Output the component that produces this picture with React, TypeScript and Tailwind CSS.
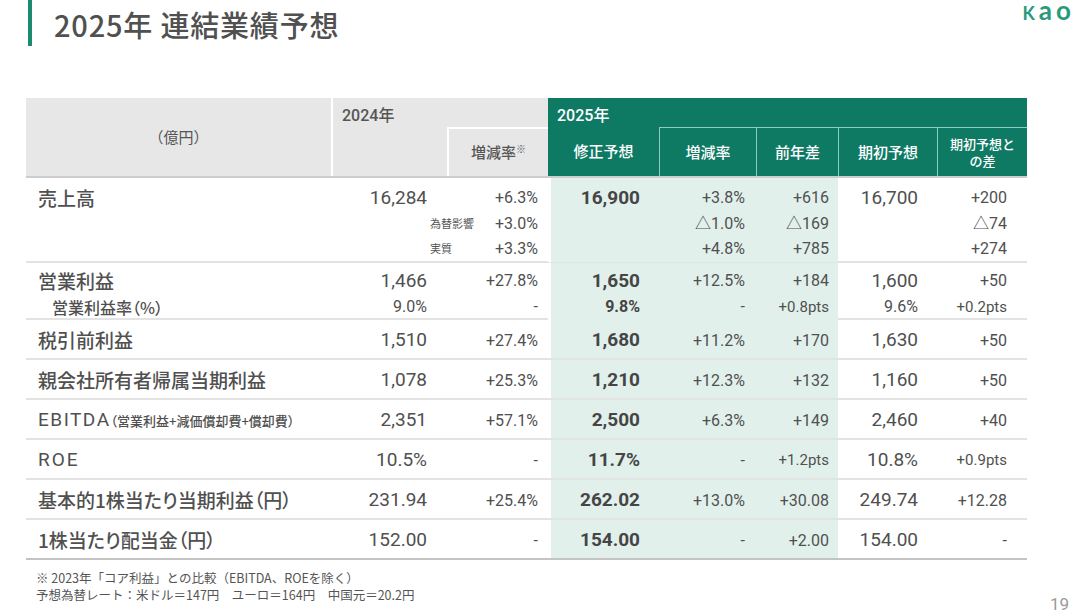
import React from "react";

const COLS = "grid grid-cols-[307px_114px_101px_111px_97px_82px_99px_90px] w-[1001px]";
const TINT = "bg-[#e2f0ec]";
const LABEL = "font-['Noto_Sans_CJK_JP',sans-serif] font-medium text-[#505050] [font-feature-settings:'palt']";

type Line = { t: string; sub?: string };

function Cell({
  lines,
  cls = "",
  tint = false,
  bold = false,
  size = "text-[16px]",
}: {
  lines: (string | Line)[];
  cls?: string;
  tint?: boolean;
  bold?: boolean;
  size?: string;
}) {
  return (
    <div className={`flex flex-col ${tint ? TINT : ""} ${cls}`}>
      {lines.map((l, i) => {
        const line: Line = typeof l === "string" ? { t: l } : l;
        return (
          <div key={i} className={`flex items-center justify-end whitespace-nowrap ${bold ? "font-bold text-[#454545]" : ""} ${size}`}>
            {line.sub !== undefined && (
              <span className="ml-[-17px] mr-auto text-[11px] text-[#555] font-['Noto_Sans_CJK_JP',sans-serif]">{line.sub}</span>
            )}
            <span>{line.t}</span>
          </div>
        );
      })}
    </div>
  );
}

type RowDef = {
  label: React.ReactNode;
  v24: string;
  r24: string;
  f25: string;
  r25: string;
  d25: string;
  init: string;
  dInit: string;
};

function SimpleRow({ r, last = false }: { r: RowDef; last?: boolean }) {
  return (
    <div className={`${COLS} h-[40px] pt-[3px] ${last ? "border-b-2 border-[#c4c4c4]" : "border-b-2 border-[#e3e3e3]"}`}>
      <div className={`flex items-center pl-[12px] text-[19px] whitespace-nowrap ${LABEL}`}>{r.label}</div>
      <div className="flex items-center justify-end pr-[20px] text-[19px]">{r.v24}</div>
      <div className="flex items-center justify-end pr-[10px] text-[16px]">{r.r24}</div>
      <div className={`flex items-center justify-end pr-[19px] text-[19px] font-bold text-[#454545] border-l-[3px] border-white mt-[-3px] pt-[3px] ${TINT}`}>{r.f25}</div>
      <div className={`flex items-center justify-end pr-[11px] text-[16px] mt-[-3px] pt-[3px] ${TINT}`}>{r.r25}</div>
      <div className={`flex items-center justify-end pr-[9px] mt-[-3px] pt-[3px] ${r.d25.includes("pts") ? "text-[15px]" : "text-[16px]"} ${TINT}`}>{r.d25}</div>
      <div className="flex items-center justify-end pr-[19px] text-[19px]">{r.init}</div>
      <div className={`flex items-center justify-end pr-[20px] ${r.dInit.includes("pts") ? "text-[15px]" : "text-[16px]"}`}>{r.dInit}</div>
    </div>
  );
}

export default function App() {
  const rows: RowDef[] = [
    { label: "税引前利益", v24: "1,510", r24: "+27.4%", f25: "1,680", r25: "+11.2%", d25: "+170", init: "1,630", dInit: "+50" },
    { label: "親会社所有者帰属当期利益", v24: "1,078", r24: "+25.3%", f25: "1,210", r25: "+12.3%", d25: "+132", init: "1,160", dInit: "+50" },
    {
      label: (
        <span className="flex items-baseline">
          <span className="font-['Roboto',sans-serif] font-normal tracking-[1.5px]">EBITDA</span>
          <span className="text-[13px]">（営業利益+減価償却費+償却費）</span>
        </span>
      ),
      v24: "2,351",
      r24: "+57.1%",
      f25: "2,500",
      r25: "+6.3%",
      d25: "+149",
      init: "2,460",
      dInit: "+40",
    },
    {
      label: <span className="font-['Roboto',sans-serif] font-normal tracking-[2px]">ROE</span>,
      v24: "10.5%",
      r24: "-",
      f25: "11.7%",
      r25: "-",
      d25: "+1.2pts",
      init: "10.8%",
      dInit: "+0.9pts",
    },
    { label: "基本的1株当たり当期利益（円）", v24: "231.94", r24: "+25.4%", f25: "262.02", r25: "+13.0%", d25: "+30.08", init: "249.74", dInit: "+12.28" },
    { label: "1株当たり配当金（円）", v24: "152.00", r24: "-", f25: "154.00", r25: "-", d25: "+2.00", init: "154.00", dInit: "-" },
  ];

  return (
    <div className="w-[1080px] h-[613px] bg-white text-[#505050] font-['Roboto','Noto_Sans_CJK_JP',sans-serif] overflow-hidden">
      {/* Title */}
      <div className="flex items-start h-[46px]">
        <div className="ml-[28px] w-[4px] h-[46px] bg-[#1c8a6f]" />
        <div className="ml-[22px] mt-[5px] text-[29px] leading-[38px] font-medium text-[#505050] font-['Noto_Sans_CJK_JP',sans-serif] tracking-[0.8px] whitespace-nowrap">
          2025年 連結業績予想
        </div>
        <div className="ml-auto mr-[5px] mt-[0px] h-[22px] flex items-baseline text-[#2a9a7c] font-['Lato',sans-serif] font-bold leading-[20px] tracking-[4px]">
          <span className="text-[18px]">K</span>
          <span className="text-[26px]">ao</span>
        </div>
      </div>

      {/* Table */}
      <div className="ml-[26px] mt-[52px] w-[1001px]">
        {/* Header */}
        <div className={`${COLS} grid-rows-[29px_49px] border-b-2 border-[#cdcdcd] text-[15px]`}>
          <div className="row-span-2 col-start-1 row-start-1 bg-[#e7e7e7] border-r-2 border-white flex items-center justify-center font-['Noto_Sans_CJK_JP',sans-serif] text-[#555]">
            （億円）
          </div>
          <div className="col-start-2 col-span-2 row-start-1 bg-[#e7e7e7] flex items-center pt-[6px] pl-[9px] text-[16px] font-medium text-[#555]">
            2024年
          </div>
          <div className="col-start-2 row-start-2 bg-[#e7e7e7]" />
          <div className="col-start-3 row-start-2 bg-[#e7e7e7] border-t-2 border-l-2 border-white flex items-center justify-center font-medium text-[#555] font-['Noto_Sans_CJK_JP',sans-serif]">
            増減率<span className="text-[10px] self-start mt-[12px]">※</span>
          </div>
          <div className="col-start-4 col-span-5 row-start-1 bg-[#0f7a64] flex items-center pt-[6px] pl-[9px] text-[16px] font-medium text-white">
            2025年
          </div>
          <div className="col-start-4 row-start-2 bg-[#0f7a64] flex items-center justify-center text-white font-medium font-['Noto_Sans_CJK_JP',sans-serif]">
            修正予想
          </div>
          <div className="col-start-5 row-start-2 bg-[#0f7a64] border-t border-l border-[#8fcbbb] flex items-center justify-center text-white font-medium font-['Noto_Sans_CJK_JP',sans-serif]">
            増減率
          </div>
          <div className="col-start-6 row-start-2 bg-[#0f7a64] border-t border-l border-[#8fcbbb] flex items-center justify-center text-white font-medium font-['Noto_Sans_CJK_JP',sans-serif]">
            前年差
          </div>
          <div className="col-start-7 row-start-2 bg-[#0f7a64] border-t border-l border-[#8fcbbb] flex items-center justify-center text-white font-medium font-['Noto_Sans_CJK_JP',sans-serif]">
            期初予想
          </div>
          <div className="col-start-8 row-start-2 bg-[#0f7a64] border-t border-l border-[#8fcbbb] flex flex-col items-center justify-center text-white text-[13px] leading-[17px] font-medium font-['Noto_Sans_CJK_JP',sans-serif]">
            <span>期初予想と</span>
            <span>の差</span>
          </div>
        </div>

        {/* 売上高 */}
        <div className={`${COLS} h-[85px] border-b-2 border-[#e3e3e3] leading-[25.5px]`}>
          <div className={`pt-[7px] pl-[12px] text-[19px] ${LABEL}`}>売上高</div>
          <Cell lines={["16,284"]} cls="pt-[7px] pr-[20px]" size="text-[19px]" />
          <Cell
            lines={["+6.3%", { t: "+3.0%", sub: "為替影響" }, { t: "+3.3%", sub: "実質" }]}
            cls="pt-[7px] pr-[10px]"
          />
          <Cell lines={["16,900"]} cls="pt-[7px] pr-[19px] border-l-[3px] border-white" tint bold size="text-[19px]" />
          <Cell lines={["+3.8%", "△1.0%", "+4.8%"]} cls="pt-[7px] pr-[11px]" tint />
          <Cell lines={["+616", "△169", "+785"]} cls="pt-[7px] pr-[9px]" tint />
          <Cell lines={["16,700"]} cls="pt-[7px] pr-[19px]" size="text-[19px]" />
          <Cell lines={["+200", "△74", "+274"]} cls="pt-[7px] pr-[20px]" />
        </div>

        {/* 営業利益 */}
        <div className={`${COLS} h-[57px] border-b-2 border-[#e3e3e3] leading-[26px]`}>
          <div className={`pt-[5px] flex flex-col whitespace-nowrap ${LABEL}`}>
            <span className="pl-[12px] text-[19px]">営業利益</span>
            <span className="pl-[26px] text-[16px]">営業利益率（%）</span>
          </div>
          <div className="pt-[5px] pr-[20px] flex flex-col items-end">
            <span className="text-[19px]">1,466</span>
            <span className="text-[16px]">9.0%</span>
          </div>
          <Cell lines={["+27.8%", "-"]} cls="pt-[5px] pr-[10px]" />
          <div className={`pt-[5px] pr-[19px] flex flex-col items-end font-bold text-[#454545] border-l-[3px] border-white ${TINT}`}>
            <span className="text-[19px]">1,650</span>
            <span className="text-[16px]">9.8%</span>
          </div>
          <Cell lines={["+12.5%", "-"]} cls="pt-[5px] pr-[11px]" tint />
          <div className={`pt-[5px] pr-[9px] flex flex-col items-end ${TINT}`}>
            <span className="text-[16px]">+184</span>
            <span className="text-[15px]">+0.8pts</span>
          </div>
          <div className="pt-[5px] pr-[19px] flex flex-col items-end">
            <span className="text-[19px]">1,600</span>
            <span className="text-[16px]">9.6%</span>
          </div>
          <div className="pt-[5px] pr-[20px] flex flex-col items-end">
            <span className="text-[16px]">+50</span>
            <span className="text-[15px]">+0.2pts</span>
          </div>
        </div>

        {rows.map((r, i) => (
          <SimpleRow key={i} r={r} last={i === rows.length - 1} />
        ))}
      </div>

      {/* Footer */}
      <div className="flex items-start mt-[9px]">
        <div className="ml-[36px] text-[12.5px] leading-[17px] text-[#555] font-['Noto_Sans_CJK_JP',sans-serif]">
          <div>※ 2023年「コア利益」との比較（EBITDA、ROEを除く）</div>
          <div>予想為替レート：米ドル＝147円　ユーロ＝164円　中国元＝20.2円</div>
        </div>
        <div className="ml-auto mr-[11px] mt-[23px] text-[17px] text-[#9a9a9a]">19</div>
      </div>
    </div>
  );
}
